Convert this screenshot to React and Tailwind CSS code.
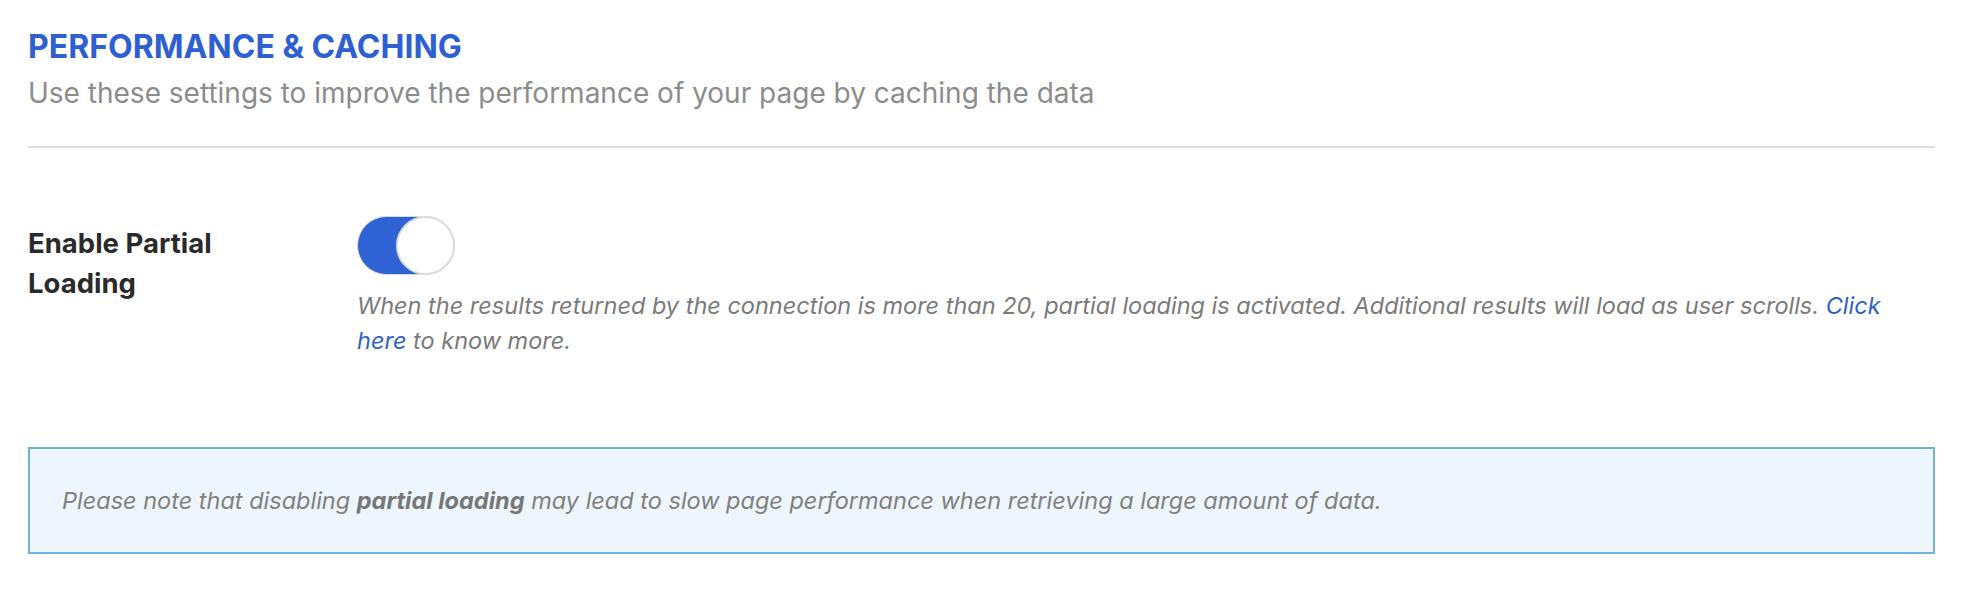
import React, { useState } from 'react';

const Toggle = ({ checked, onChange }) => (
  <button
    type="button"
    onClick={() => onChange(!checked)}
    className={`relative flex h-[59px] w-[98px] items-center rounded-full border border-[#d9d9d9] ${checked ? 'bg-[#2f62d5]' : 'bg-[#e5e5e5]'}`}
  >
    <span
      className={`absolute top-[-1px] h-[59px] w-[59px] rounded-full border-2 border-[#dcdcdc] bg-white ${checked ? 'right-[-1px]' : 'left-[-1px]'}`}
    />
  </button>
);

const App = () => {
  const [partial, setPartial] = useState(true);

  return (
    <div className="min-h-screen bg-white pl-[28px] pr-[35px] pt-[28px] font-['Inter','Noto_Sans',sans-serif]">
      {/* Header */}
      <div className="border-b-2 border-[#dedede] pb-[35px]">
        <h2 className="text-[32px] font-bold leading-[38px] text-[#2e60d2]">PERFORMANCE &amp; CACHING</h2>
        <p className="mt-[9px] text-[28px] leading-[36px] text-[#8c8c8c]">
          Use these settings to improve the performance of your page by caching the data
        </p>
      </div>

      {/* Partial loading row */}
      <div className="mt-[68px] grid grid-cols-[329px_1fr]">
        <div className="max-w-[250px] pt-[7px] text-[27.5px] font-bold leading-[40px] text-[#2a2a2a]">
          Enable Partial Loading
        </div>
        <div>
          <Toggle checked={partial} onChange={setPartial} />
          <p className="mt-[13px] text-[23.5px] italic leading-[35px] text-[#7a7a7a]">
            When the results returned by the connection is more than 20, partial loading is activated. Additional results will load as user scrolls.{' '}
            <a href="#" className="text-[#2f5fc9]">Click here</a> to know more.
          </p>
        </div>
      </div>

      {/* Notice */}
      <div className="mt-[89px] flex h-[107px] items-center border-2 border-[#74b3d0] bg-[#edf6fd] px-[32px]">
        <p className="text-[23.5px] italic text-[#808080]">
          Please note that disabling <span className="font-bold text-[#777]">partial loading</span> may lead to slow page performance when retrieving a large amount of data.
        </p>
      </div>
    </div>
  );
};

export default App;
